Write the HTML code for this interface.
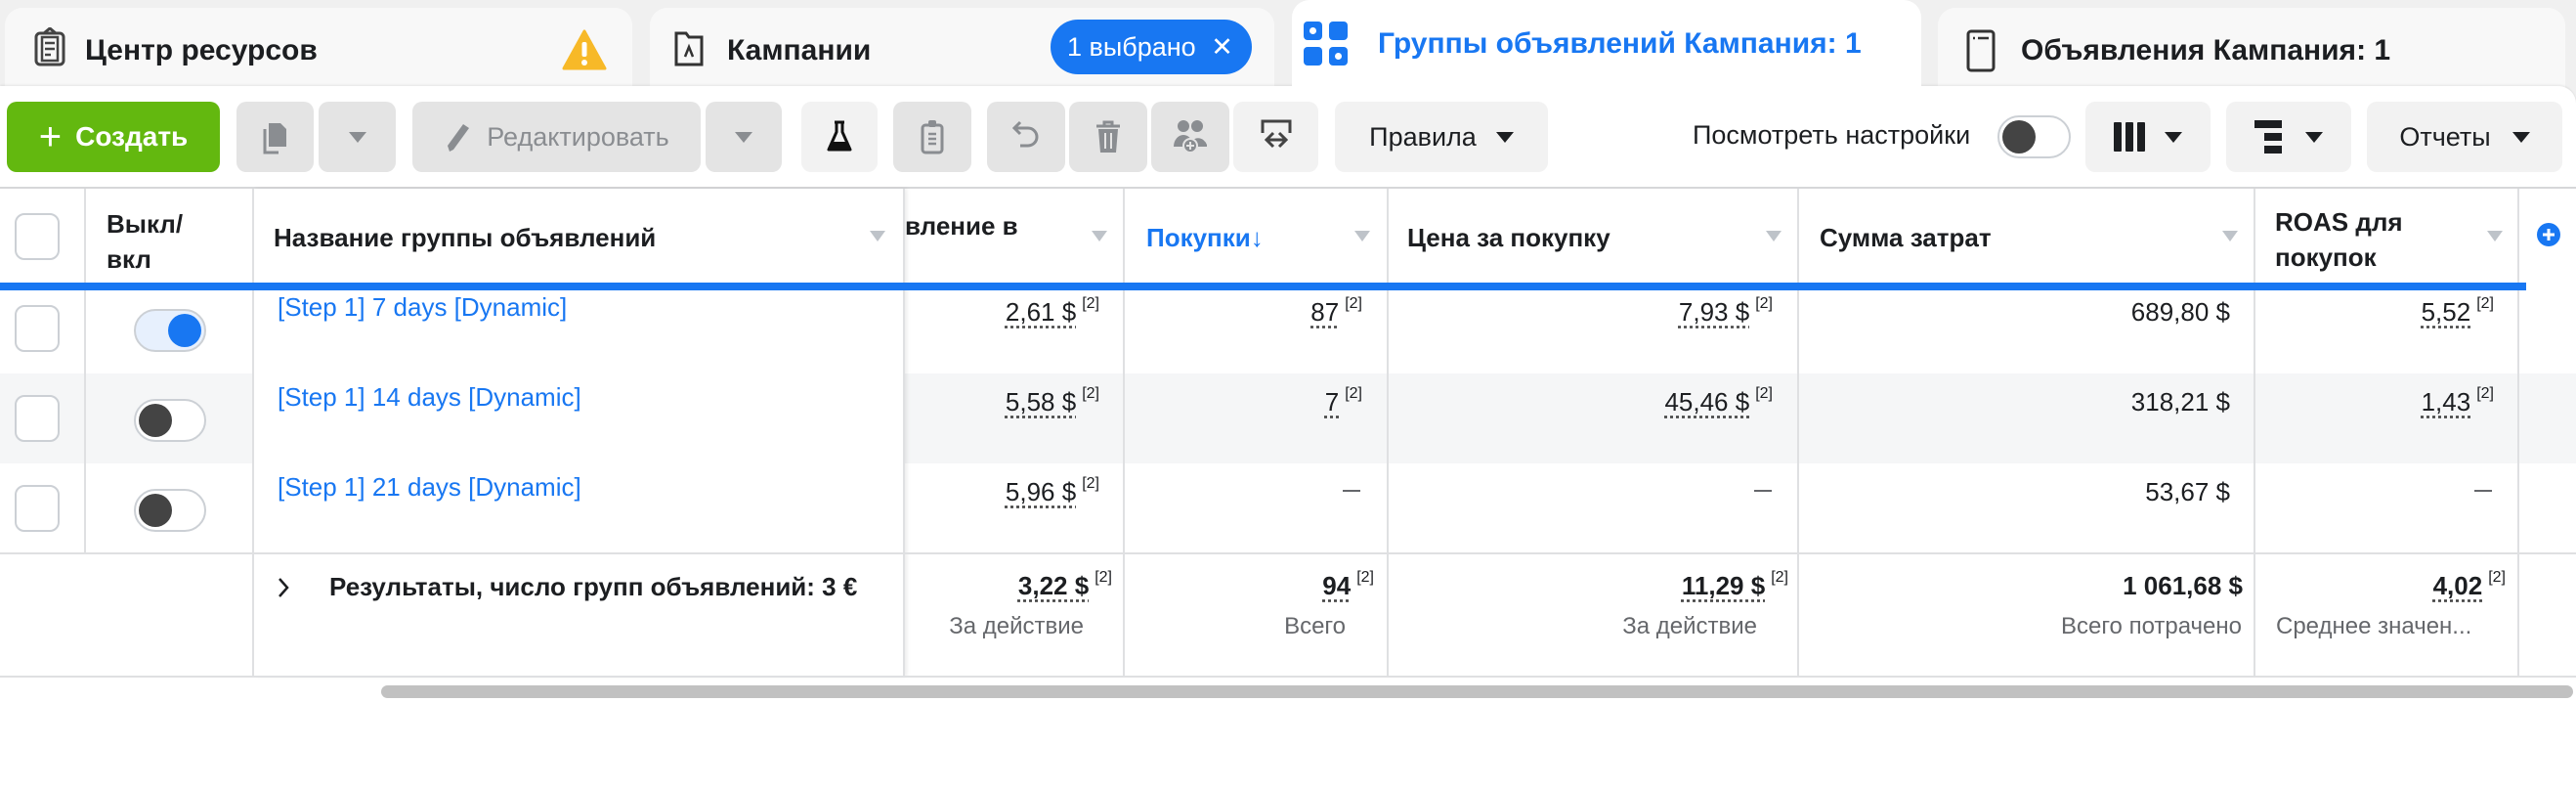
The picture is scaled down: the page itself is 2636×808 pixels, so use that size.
<!DOCTYPE html>
<html><head><meta charset="utf-8">
<style>
*{box-sizing:border-box;margin:0;padding:0}
body{width:2636px;height:808px;background:#f0f0f0;font-family:"Liberation Sans",Arial,sans-serif;position:relative;overflow:hidden;color:#1c1e21}
.abs{position:absolute}
.tab{position:absolute;top:8px;height:100px;background:#f8f8f8;border-radius:18px 18px 0 0;font-weight:bold;font-size:30px;color:#1c1e21}
.tab .t{position:absolute;top:27px}
.content{position:absolute;left:0;top:88px;width:2636px;height:720px;background:#fff;border-radius:0 18px 0 0;box-shadow:0 -1px 2px rgba(0,0,0,.08)}
.btn{position:absolute;top:104px;height:72px;background:#ebebeb;border-radius:10px;display:flex;align-items:center;justify-content:center;font-size:26px;color:#1c1e21}
.dis{background:#e4e4e4;color:#8a8d91}
.tri{width:0;height:0;border-left:9px solid transparent;border-right:9px solid transparent;border-top:11px solid #1c1e21;display:inline-block}
.vl{position:absolute;width:2px;background:#dfe0e2}
.hl{position:absolute;height:2px;background:#dfe0e2}
.th{position:absolute;font-weight:bold;font-size:26px;line-height:36px;color:#1c1e21}
.st{position:absolute;width:0;height:0;border-left:8px solid transparent;border-right:8px solid transparent;border-top:11px solid #bec3c9;top:236px}
.cb{position:absolute;left:15px;width:46px;height:48px;border:2px solid #ccd0d5;border-radius:10px;background:#fff}
.lnk{position:absolute;left:284px;font-size:26px;color:#1877f2}
.num{position:absolute;font-size:26px;text-align:right;white-space:nowrap}
.num u{text-decoration:underline dotted #444;text-underline-offset:5px}
.num sup{font-size:16px;vertical-align:top;margin-left:6px;position:relative;top:-2px}
.sub{position:absolute;font-size:24px;color:#65676b;text-align:right;white-space:nowrap}
.dash{position:absolute;width:18px;height:2px;background:#65676b}
</style></head><body>

<div class="tab" style="left:5px;width:642px">
  <svg class="abs" style="left:29px;top:20px" width="34" height="40" viewBox="0 0 34 40"><rect x="3" y="6" width="28" height="32" rx="4" fill="none" stroke="#444" stroke-width="3"/><path d="M11 6 L17 1 L23 6" fill="none" stroke="#444" stroke-width="3"/><rect x="9" y="10" width="16" height="24" fill="none" stroke="#444" stroke-width="2.5"/><path d="M12 16h10M12 22h10M12 28h6" stroke="#444" stroke-width="2.5"/></svg>
  <span class="t" style="left:82px">Центр ресурсов</span>
  <svg class="abs" style="left:570px;top:22px" width="46" height="42" viewBox="0 0 46 42"><path d="M23 2 L44 40 L2 40 Z" fill="#f7b928" stroke="#f7b928" stroke-width="3" stroke-linejoin="round"/><rect x="20.5" y="13" width="5" height="15" rx="2" fill="#fff"/><circle cx="23" cy="34" r="3" fill="#fff"/></svg>
</div>
<div class="tab" style="left:665px;width:639px">
  <svg class="abs" style="left:25px;top:22px" width="30" height="38" viewBox="0 0 30 38"><path d="M2 4h10l3 4h13v28H2z" fill="none" stroke="#333" stroke-width="3"/><path d="M11 28l4-10 4 10" fill="none" stroke="#333" stroke-width="2.5"/></svg>
  <span class="t" style="left:79px">Кампании</span>
  <div class="abs" style="left:410px;top:12px;width:206px;height:56px;background:#1877f2;border-radius:28px;color:#fff;font-weight:normal;font-size:27px;line-height:56px;padding-left:17px">1 выбрано <span style="margin-left:8px">✕</span></div>
</div>
<div class="tab" style="left:1983px;width:642px">
  <svg class="abs" style="left:29px;top:22px" width="30" height="44" viewBox="0 0 30 44"><rect x="2" y="2" width="26" height="40" rx="3" fill="none" stroke="#333" stroke-width="3"/><path d="M7 9h2M12 9h11" stroke="#333" stroke-width="2.5"/></svg>
  <span class="t" style="left:85px">Объявления Кампания: 1</span>
</div>

<div class="content"></div>

<div class="tab" style="left:1322px;width:644px;top:0;background:#fff;height:92px">
  <svg class="abs" style="left:12px;top:22px" width="46" height="46" viewBox="0 0 46 46"><rect x="0" y="0" width="19" height="19" rx="4" fill="#1877f2"/><rect x="26" y="0" width="19" height="19" rx="4" fill="#1877f2"/><rect x="0" y="26" width="19" height="19" rx="4" fill="#1877f2"/><rect x="26" y="26" width="19" height="19" rx="4" fill="#1877f2"/><circle cx="9.5" cy="9.5" r="3.5" fill="#fff"/><circle cx="35.5" cy="35.5" r="3.5" fill="#fff"/></svg>
  <span class="t" style="left:88px;top:28px;color:#1877f2">Группы объявлений Кампания: 1</span>
</div>

<div class="btn" style="left:7px;width:218px;background:#63b80f;color:#fff;font-weight:bold;font-size:28px"><span style="font-weight:normal;font-size:40px;margin-right:14px;line-height:1">+</span>Создать</div>
<div class="btn dis" style="left:242px;width:79px"><svg width="30" height="36" viewBox="0 0 30 36"><path d="M8 4h12l6 6v18H8z" fill="#8a8d91"/><path d="M4 10v24h14" fill="none" stroke="#8a8d91" stroke-width="3"/></svg></div>
<div class="btn dis" style="left:326px;width:79px"><span class="tri" style="border-top-color:#8a8d91"></span></div>
<div class="btn dis" style="left:422px;width:295px;font-size:27px"><svg width="30" height="34" viewBox="0 0 30 34" style="margin-right:14px"><path d="M6 32 L4 26 L20 4 L26 8 L10 30 Z" fill="#8a8d91"/></svg>Редактировать</div>
<div class="btn dis" style="left:722px;width:78px"><span class="tri" style="border-top-color:#8a8d91"></span></div>
<div class="btn" style="left:820px;width:78px;background:#f2f2f2"><svg width="26" height="34" viewBox="0 0 26 34"><path d="M8 2h10M10 2v10L2 30h22L16 12V2" fill="none" stroke="#111" stroke-width="3" stroke-linejoin="round"/><path d="M5 22h16l3 8H2z" fill="#111"/></svg></div>
<div class="btn dis" style="left:914px;width:80px"><svg width="24" height="36" viewBox="0 0 24 36"><rect x="2" y="6" width="20" height="28" rx="3" fill="none" stroke="#8a8d91" stroke-width="3"/><rect x="8" y="1" width="8" height="7" rx="2" fill="#8a8d91"/><path d="M8 15h8M8 20h8M8 25h8" stroke="#8a8d91" stroke-width="2.5"/></svg></div>
<div class="btn dis" style="left:1010px;width:80px"><svg width="28" height="34" viewBox="0 0 28 34"><path d="M8 2L2 8l6 6" fill="none" stroke="#8a8d91" stroke-width="3"/><path d="M2 8h14a9 9 0 0 1 0 18H8" fill="none" stroke="#8a8d91" stroke-width="3"/></svg></div>
<div class="btn dis" style="left:1094px;width:80px"><svg width="28" height="36" viewBox="0 0 28 36"><path d="M2 7h24M10 7V3h8v4" stroke="#8a8d91" stroke-width="3" fill="none"/><path d="M4 10h20l-2 24H6z" fill="#8a8d91"/><path d="M11 14v16M17 14v16" stroke="#e4e4e4" stroke-width="2"/></svg></div>
<div class="btn dis" style="left:1178px;width:80px"><svg width="34" height="36" viewBox="0 0 34 36"><circle cx="10" cy="7" r="6" fill="#8a8d91"/><circle cx="24" cy="7" r="6" fill="#8a8d91"/><path d="M0 28a10 12 0 0 1 20 0z" fill="#8a8d91"/><path d="M16 26a10 12 0 0 1 18 0v2H16z" fill="#8a8d91"/><circle cx="17" cy="27" r="7" fill="#8a8d91" stroke="#e4e4e4" stroke-width="2"/><path d="M17 23v8M13 27h8" stroke="#e4e4e4" stroke-width="2"/></svg></div>
<div class="btn" style="left:1262px;width:87px;background:#f2f2f2"><svg width="32" height="36" viewBox="0 0 32 36"><path d="M2 14V2h28v12" fill="none" stroke="#444" stroke-width="3"/><path d="M13 14l-7 7 7 7M19 14l7 7-7 7M6 21h20" fill="none" stroke="#444" stroke-width="3"/></svg></div>
<div class="btn" style="left:1366px;width:218px;background:#f2f2f2;font-size:27px">Правила<span class="tri" style="margin-left:20px"></span></div>
<div class="abs" style="left:1732px;top:123px;font-size:27px">Посмотреть настройки</div>
<div class="abs" style="left:2044px;top:118px;width:75px;height:44px;border:2px solid #ccd0d5;border-radius:22px;background:#fff"><div class="abs" style="left:3px;top:3px;width:34px;height:34px;border-radius:50%;background:#444"></div></div>
<div class="btn" style="left:2134px;width:128px;background:#f2f2f2"><svg width="32" height="30" viewBox="0 0 32 30"><rect x="0" y="0" width="8" height="30" rx="1" fill="#1c1e21"/><rect x="12" y="0" width="8" height="30" rx="1" fill="#1c1e21"/><rect x="24" y="0" width="8" height="30" rx="1" fill="#1c1e21"/></svg><span class="tri" style="margin-left:20px"></span></div>
<div class="btn" style="left:2278px;width:128px;background:#f2f2f2"><svg width="28" height="34" viewBox="0 0 28 34"><rect x="0" y="0" width="28" height="8" fill="#1c1e21"/><rect x="10" y="13" width="18" height="8" fill="#1c1e21"/><rect x="10" y="26" width="18" height="8" fill="#1c1e21"/></svg><span class="tri" style="margin-left:24px"></span></div>
<div class="btn" style="left:2422px;width:200px;background:#f2f2f2;font-size:27px">Отчеты<span class="tri" style="margin-left:22px"></span></div>

<div class="hl" style="left:0;top:191px;width:2636px;background:#d6d7d9"></div>
<div class="abs" style="left:0;top:382px;width:2636px;height:92px;background:#f5f6f7"></div>
<div class="abs" style="left:259px;top:193px;width:666px;height:499px;background:#fff;box-shadow:3px 0 4px rgba(0,0,0,.08)"></div>
<div class="vl" style="left:86px;top:193px;height:373px"></div>
<div class="vl" style="left:258px;top:193px;height:499px"></div>
<div class="vl" style="left:924px;top:193px;height:499px"></div>
<div class="vl" style="left:1149px;top:193px;height:499px"></div>
<div class="vl" style="left:1419px;top:193px;height:499px"></div>
<div class="vl" style="left:1839px;top:193px;height:499px"></div>
<div class="vl" style="left:2306px;top:193px;height:499px"></div>
<div class="vl" style="left:2576px;top:193px;height:499px"></div>
<div class="hl" style="left:0;top:565px;width:2636px"></div>
<div class="hl" style="left:0;top:691px;width:2636px"></div>
<div class="abs" style="left:0;top:289px;width:2585px;height:8px;background:#1877f2"></div>

<div class="cb" style="top:218px"></div>
<div class="th" style="left:109px;top:211px">Выкл/<br>вкл</div>
<div class="th" style="left:280px;top:225px">Название группы объявлений</div>
<div class="st" style="left:890px"></div>
<div class="th" style="left:926px;top:213px;width:180px;overflow:hidden;white-space:nowrap;direction:rtl;text-align:left"><span style="direction:ltr">вление в</span></div>
<div class="st" style="left:1117px"></div>
<div class="th" style="left:1173px;top:225px;color:#1877f2">Покупки↓</div>
<div class="st" style="left:1386px"></div>
<div class="th" style="left:1440px;top:225px">Цена за покупку</div>
<div class="st" style="left:1807px"></div>
<div class="th" style="left:1862px;top:225px">Сумма затрат</div>
<div class="st" style="left:2274px"></div>
<div class="th" style="left:2328px;top:209px">ROAS для<br>покупок</div>
<div class="st" style="left:2545px"></div>
<svg class="abs" style="left:2596px;top:228px" width="24" height="24" viewBox="0 0 24 24"><circle cx="12" cy="12" r="12" fill="#1877f2"/><path d="M12 6v12M6 12h12" stroke="#fff" stroke-width="3"/></svg>

<div class="cb" style="top:312px"></div>
<div class="abs" style="left:137px;top:316px;width:74px;height:44px;border:2px solid #ccd0d5;border-radius:22px;background:#e7f0fd"><div class="abs" style="right:3px;top:3px;width:34px;height:34px;border-radius:50%;background:#1877f2"></div></div>
<div class="lnk" style="top:299px">[Step 1] 7 days [Dynamic]</div>
<div class="cb" style="top:404px"></div>
<div class="abs" style="left:137px;top:408px;width:74px;height:44px;border:2px solid #ccd0d5;border-radius:22px;background:#fff"><div class="abs" style="left:3px;top:3px;width:34px;height:34px;border-radius:50%;background:#444"></div></div>
<div class="lnk" style="top:391px">[Step 1] 14 days [Dynamic]</div>
<div class="cb" style="top:496px"></div>
<div class="abs" style="left:137px;top:500px;width:74px;height:44px;border:2px solid #ccd0d5;border-radius:22px;background:#fff"><div class="abs" style="left:3px;top:3px;width:34px;height:34px;border-radius:50%;background:#444"></div></div>
<div class="lnk" style="top:483px">[Step 1] 21 days [Dynamic]</div>

<div class="num" style="right:1511px;top:304px"><u>2,61 $</u><sup>[2]</sup></div>
<div class="num" style="right:1242px;top:304px"><u>87</u><sup>[2]</sup></div>
<div class="num" style="right:822px;top:304px"><u>7,93 $</u><sup>[2]</sup></div>
<div class="num" style="right:354px;top:304px">689,80 $</div>
<div class="num" style="right:84px;top:304px"><u>5,52</u><sup>[2]</sup></div>
<div class="num" style="right:1511px;top:396px"><u>5,58 $</u><sup>[2]</sup></div>
<div class="num" style="right:1242px;top:396px"><u>7</u><sup>[2]</sup></div>
<div class="num" style="right:822px;top:396px"><u>45,46 $</u><sup>[2]</sup></div>
<div class="num" style="right:354px;top:396px">318,21 $</div>
<div class="num" style="right:84px;top:396px"><u>1,43</u><sup>[2]</sup></div>
<div class="num" style="right:1511px;top:488px"><u>5,96 $</u><sup>[2]</sup></div>
<div class="dash" style="left:1374px;top:501px"></div>
<div class="dash" style="left:1795px;top:501px"></div>
<div class="num" style="right:354px;top:488px">53,67 $</div>
<div class="dash" style="left:2532px;top:501px"></div>

<svg class="abs" style="left:283px;top:589px" width="14" height="24" viewBox="0 0 14 24"><path d="M3 3l8 9-8 9" fill="none" stroke="#1c1e21" stroke-width="2.5"/></svg>
<div class="abs" style="left:337px;top:585px;width:588px;overflow:hidden;white-space:nowrap;font-weight:bold;font-size:26px">Результаты, число групп объявлений: 3 €</div>
<div class="num" style="right:1498px;top:584px;font-weight:bold"><u>3,22 $</u><sup style="font-weight:normal">[2]</sup></div>
<div class="num" style="right:1230px;top:584px;font-weight:bold"><u>94</u><sup style="font-weight:normal">[2]</sup></div>
<div class="num" style="right:806px;top:584px;font-weight:bold"><u>11,29 $</u><sup style="font-weight:normal">[2]</sup></div>
<div class="num" style="right:341px;top:584px;font-weight:bold">1 061,68 $</div>
<div class="num" style="right:72px;top:584px;font-weight:bold"><u>4,02</u><sup style="font-weight:normal">[2]</sup></div>
<div class="sub" style="right:1527px;top:627px">За действие</div>
<div class="sub" style="right:1259px;top:627px">Всего</div>
<div class="sub" style="right:838px;top:627px">За действие</div>
<div class="sub" style="right:342px;top:627px">Всего потрачено</div>
<div class="sub" style="left:2329px;top:627px;text-align:left">Среднее значен...</div>

<div class="abs" style="left:390px;top:701px;width:2243px;height:13px;background:#c1c1c1;border-radius:7px"></div>
</body></html>
